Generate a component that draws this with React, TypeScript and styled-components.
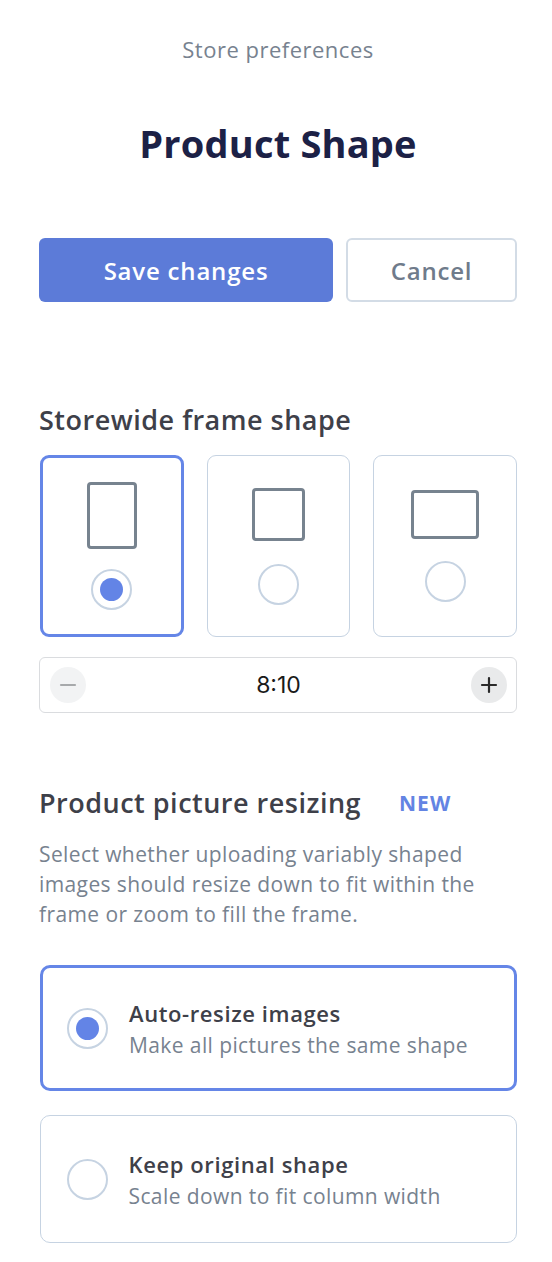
import styled, { createGlobalStyle } from "styled-components";

const GlobalStyle = createGlobalStyle`
  body {
    margin: 0;
    background: #ffffff;
    font-family: "Open Sans", "Noto Sans", sans-serif;
  }
`;

const Page = styled.div`
  width: 552px;
  box-sizing: border-box;
  padding: 36px 35px 20px 39px;
  display: flex;
  flex-direction: column;
`;

const Kicker = styled.div`
  text-align: center;
  font-size: 22px;
  font-weight: 500;
  letter-spacing: 0.5px;
  color: #77828f;
  line-height: 26px;
`;

const Title = styled.h1`
  margin: 58px 0 0;
  text-align: center;
  font-size: 38px;
  letter-spacing: 0.2px;
  font-weight: 700;
  color: #1c2146;
  line-height: 46px;
`;

const Actions = styled.div`
  margin-top: 72px;
  display: flex;
  gap: 13px;
`;

const Button = styled.button<{ $primary?: boolean }>`
  height: 64px;
  border-radius: 6px;
  font-family: inherit;
  font-size: 24px;
  letter-spacing: 0.8px;
  font-weight: 600;
  cursor: pointer;
  flex: ${p => (p.$primary ? "0 0 294px" : "1")};
  background: ${p => (p.$primary ? "#5c7bd8" : "#ffffff")};
  color: ${p => (p.$primary ? "#ffffff" : "#6f7b8b")};
  border: ${p => (p.$primary ? "none" : "2px solid #d3dce6")};
`;

const SectionTitle = styled.h2`
  margin: 0;
  font-size: 27px;
  letter-spacing: 0.5px;
  font-weight: 600;
  color: #3e4049;
  line-height: 32px;
  display: flex;
  align-items: center;
`;

const FrameSection = styled.section`
  margin-top: 102px;
  display: flex;
  flex-direction: column;
`;

const Shapes = styled.div`
  margin-top: 19px;
  display: grid;
  grid-template-columns: repeat(3, 1fr);
  gap: 23px;
  padding-left: 1px;
`;

const ShapeCard = styled.div<{ $active?: boolean; $top: number; $gap: number }>`
  height: 182px;
  box-sizing: border-box;
  border-radius: 9px;
  border: ${p => (p.$active ? "3px solid #6586e7" : "1.5px solid #c6d3e2")};
  display: flex;
  flex-direction: column;
  align-items: center;
  gap: ${p => p.$gap}px;
  padding-top: ${p => p.$top - (p.$active ? 3 : 1.5)}px;
`;

const Frame = styled.div<{ $w: number; $h: number }>`
  width: ${p => p.$w}px;
  height: ${p => p.$h}px;
  box-sizing: border-box;
  border: 3px solid #77838f;
  border-radius: 4px;
`;

const Radio = styled.span<{ $on?: boolean }>`
  width: 41px;
  height: 41px;
  box-sizing: border-box;
  border-radius: 50%;
  border: 2px solid #c6d3e2;
  display: flex;
  align-items: center;
  justify-content: center;
  flex-shrink: 0;
  &::after {
    content: "";
    width: 23px;
    height: 23px;
    border-radius: 50%;
    background: #6384e6;
    display: ${p => (p.$on ? "block" : "none")};
  }
`;

const Stepper = styled.div`
  margin-top: 20px;
  height: 56px;
  box-sizing: border-box;
  border: 1px solid #dadcdf;
  border-radius: 6px;
  display: flex;
  align-items: center;
  justify-content: space-between;
  padding: 0 9px 0 10px;
`;

const StepButton = styled.span<{ $muted?: boolean }>`
  width: 36px;
  height: 36px;
  border-radius: 50%;
  background: ${p => (p.$muted ? "#f2f3f4" : "#e9eaeb")};
  color: ${p => (p.$muted ? "#a7a9ab" : "#2a2a2a")};
  display: flex;
  align-items: center;
  justify-content: center;
`;

const StepValue = styled.span`
  font-family: Inter, Roboto, sans-serif;
  font-size: 23px;
  color: #1a1a1a;
`;

const ResizeSection = styled.section`
  margin-top: 74px;
  display: flex;
  flex-direction: column;
`;

const NewTag = styled.span`
  margin-left: 38px;
  font-size: 21px;
  font-weight: 700;
  color: #6384e3;
  letter-spacing: 1px;
`;

const Description = styled.p`
  margin: 20px 0 0;
  font-size: 21px;
  font-weight: 500;
  letter-spacing: 0.4px;
  line-height: 30px;
  color: #77828f;
`;

const Options = styled.div`
  margin-top: 36px;
  display: flex;
  flex-direction: column;
  gap: 24px;
  padding-left: 1px;
`;

const OptionCard = styled.label<{ $active?: boolean }>`
  height: ${p => (p.$active ? "126px" : "128px")};
  box-sizing: border-box;
  border-radius: 10px;
  border: ${p => (p.$active ? "3px solid #6586e7" : "1.5px solid #c6d3e2")};
  display: flex;
  align-items: center;
  gap: 21px;
  padding-left: ${p => (p.$active ? "24px" : "25.5px")};
`;

const OptionText = styled.div`
  display: flex;
  flex-direction: column;
  gap: 4px;
  margin-top: 1px;
`;

const OptionTitle = styled.span`
  font-size: 22px;
  letter-spacing: 0.6px;
  line-height: 28px;
  font-weight: 600;
  color: #3e4049;
`;

const OptionSub = styled.span`
  font-size: 21px;
  font-weight: 500;
  letter-spacing: 0.4px;
  line-height: 28px;
  color: #77828f;
`;

const shapes = [
  { w: 50, h: 67, top: 27, gap: 20 },
  { w: 53, h: 53, top: 33, gap: 23 },
  { w: 68, h: 49, top: 35, gap: 22 },
];

export default function App() {
  return (
    <>
      <GlobalStyle />
      <Page>
        <Kicker>Store preferences</Kicker>
        <Title>Product Shape</Title>
        <Actions>
          <Button $primary>Save changes</Button>
          <Button>Cancel</Button>
        </Actions>

        <FrameSection>
          <SectionTitle>Storewide frame shape</SectionTitle>
          <Shapes>
            {shapes.map((s, i) => (
              <ShapeCard key={i} $active={i === 0} $top={s.top} $gap={s.gap}>
                <Frame $w={s.w} $h={s.h} />
                <Radio $on={i === 0} />
              </ShapeCard>
            ))}
          </Shapes>
          <Stepper>
            <StepButton $muted>
              <svg width="18" height="18" viewBox="0 0 18 18">
                <path d="M2 9h14" stroke="currentColor" strokeWidth="2.2" strokeLinecap="round" />
              </svg>
            </StepButton>
            <StepValue>8:10</StepValue>
            <StepButton>
              <svg width="18" height="18" viewBox="0 0 18 18">
                <path d="M2 9h14M9 2v14" stroke="currentColor" strokeWidth="2.2" strokeLinecap="round" />
              </svg>
            </StepButton>
          </Stepper>
        </FrameSection>

        <ResizeSection>
          <SectionTitle>
            Product picture resizing
            <NewTag>NEW</NewTag>
          </SectionTitle>
          <Description>
            Select whether uploading variably shaped images should resize down to fit within the
            frame or zoom to fill the frame.
          </Description>
          <Options>
            <OptionCard $active>
              <Radio $on />
              <OptionText>
                <OptionTitle>Auto-resize images</OptionTitle>
                <OptionSub>Make all pictures the same shape</OptionSub>
              </OptionText>
            </OptionCard>
            <OptionCard>
              <Radio />
              <OptionText>
                <OptionTitle>Keep original shape</OptionTitle>
                <OptionSub>Scale down to fit column width</OptionSub>
              </OptionText>
            </OptionCard>
          </Options>
        </ResizeSection>
      </Page>
    </>
  );
}
